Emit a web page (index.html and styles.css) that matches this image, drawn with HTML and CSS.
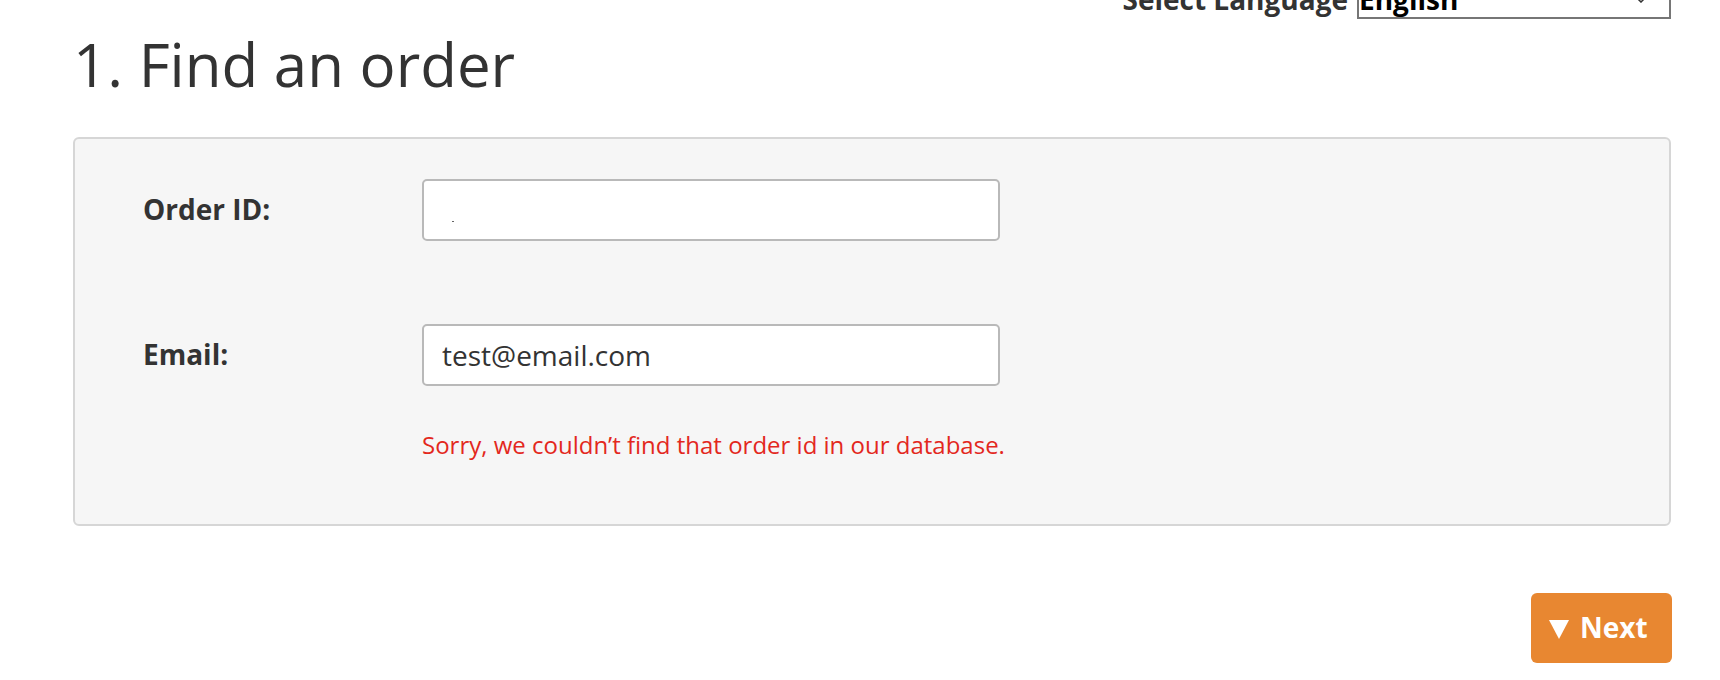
FILE: index.html
```html
<!DOCTYPE html>
<html lang="en">
<head>
<meta charset="utf-8">
<title>Find an order</title>
<link rel="stylesheet" href="styles.css">
</head>
<body>
<div class="page">
  <div class="lang-bar">
    <label class="lang-label" for="lang">Select Language</label>
    <div class="select-wrap">
      <select id="lang" class="lang-select">
        <option>English</option>
      </select>
      <svg class="select-arrow" width="12" height="7" viewBox="0 0 12 7" aria-hidden="true"><path d="M1 1 L6 6 L11 1" fill="none" stroke="#333" stroke-width="1.5"/></svg>
    </div>
  </div>

  <h1 class="title">1. Find an order</h1>

  <form class="panel">
    <label class="field-label" for="order">Order ID:</label>
    <div class="field">
      <input id="order" class="text-input" type="text" value="">
      <span class="dot"></span>
    </div>

    <label class="field-label row-next" for="email">Email:</label>
    <div class="field row-next">
      <input id="email" class="text-input" type="text" value="test@email.com">
    </div>

    <div class="error">Sorry, we couldn’t find that order id in our database.</div>
  </form>

  <div class="actions">
    <button class="next-btn" type="button"><svg class="tri" width="20" height="19" viewBox="0 0 20 19" aria-hidden="true"><path d="M0 0 H20 L10 19 Z" fill="#fff"/></svg>Next</button>
  </div>
</div>
</body>
</html>
```

FILE: styles.css
```css
html, body {
  margin: 0;
  padding: 0;
  background: #fff;
}

body {
  font-family: "Open Sans", "Liberation Sans", sans-serif;
  color: #333;
  overflow: hidden;
}

.page {
  padding: 0 49px 0 73px;
}

.lang-bar {
  display: flex;
  justify-content: flex-end;
  align-items: center;
  gap: 9px;
  margin-top: -22px;
}

.lang-label {
  font-size: 28px;
  font-weight: 700;
  color: #333;
}

.select-wrap {
  position: relative;
}

.lang-select {
  -webkit-appearance: none;
  appearance: none;
  box-sizing: border-box;
  width: 314px;
  height: 41px;
  margin: 0;
  padding: 0;
  border: 2px solid #767676;
  border-radius: 0;
  background: #fff;
  font-family: "Open Sans", "Liberation Sans", sans-serif;
  font-size: 28px;
  font-weight: 700;
  color: #000;
  display: block;
}

.select-arrow {
  position: absolute;
  right: 24px;
  top: 18px;
}

.title {
  margin: 12px 0 40px;
  font-size: 60px;
  line-height: 66px;
  font-weight: 400;
  color: #333;
}

.panel {
  display: grid;
  grid-template-columns: 279px 578px;
  align-items: center;
  padding: 40px 0 62px 68px;
  background: #f6f6f6;
  border: 2px solid #d6d6d6;
  border-radius: 6px;
  margin: 0;
}

.field-label {
  font-size: 28px;
  line-height: 1.4;
  font-weight: 700;
  color: #333;
}

.row-next {
  margin-top: 83px;
}

.field {
  position: relative;
}

.text-input {
  box-sizing: border-box;
  display: block;
  width: 578px;
  height: 62px;
  margin: 0;
  padding: 0 18px;
  border: 2px solid #b9b9b9;
  border-radius: 5px;
  background: #fff;
  font-family: "Open Sans", "Liberation Sans", sans-serif;
  font-size: 28px;
  color: #333;
  outline: none;
}

.dot {
  position: absolute;
  left: 30px;
  top: 42px;
  width: 2px;
  height: 1px;
  background: #666;
}

.error {
  grid-column: 2;
  margin-top: 42px;
  font-size: 24px;
  line-height: 1.4;
  color: #e3281d;
  white-space: nowrap;
}

.actions {
  display: flex;
  justify-content: flex-end;
  margin-top: 67px;
  margin-right: -1px;
}

.next-btn {
  display: flex;
  align-items: center;
  box-sizing: border-box;
  width: 141px;
  height: 70px;
  padding: 0 0 0 18px;
  border: none;
  border-radius: 6px;
  background: #e88731;
  color: #fff;
  font-family: "Open Sans", "Liberation Sans", sans-serif;
  font-size: 28px;
  font-weight: 700;
  line-height: 1.4;
}

.tri {
  margin-right: 11px;
  margin-top: 3px;
  flex: none;
}
```
